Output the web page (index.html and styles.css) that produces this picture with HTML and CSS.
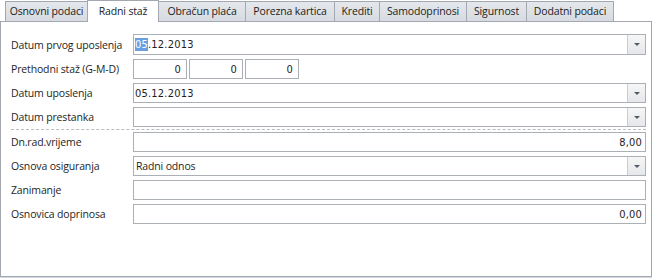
FILE: index.html
```html
<!DOCTYPE html>
<html>
<head>
<meta charset="utf-8">
<link rel="stylesheet" href="styles.css">
</head>
<body>
<div class="frame">
  <div class="tabs">
    <div class="tab t1">Osnovni podaci</div>
    <div class="tab t2 active">Radni staž</div>
    <div class="tab t3">Obračun plaća</div>
    <div class="tab t4">Porezna kartica</div>
    <div class="tab t5">Krediti</div>
    <div class="tab t6">Samodoprinosi</div>
    <div class="tab t7">Sigurnost</div>
    <div class="tab t8">Dodatni podaci</div>
  </div>
  <div class="panel">
    <div class="row first">
      <div class="label">Datum prvog uposlenja</div>
      <div class="field combo"><span class="val"><span class="sel">05</span>.12.2013</span><span class="btn"><i class="tri"></i></span></div>
    </div>
    <div class="row">
      <div class="label">Prethodni staž (G-M-D)</div>
      <div class="triple">
        <div class="field small num"><span class="val">0</span></div>
        <div class="field small num"><span class="val">0</span></div>
        <div class="field small num"><span class="val">0</span></div>
      </div>
    </div>
    <div class="row">
      <div class="label">Datum uposlenja</div>
      <div class="field combo"><span class="val">05.12.2013</span><span class="btn"><i class="tri"></i></span></div>
    </div>
    <div class="row">
      <div class="label">Datum prestanka</div>
      <div class="field combo"><span class="val"></span><span class="btn"><i class="tri"></i></span></div>
    </div>
    <div class="sep"></div>
    <div class="row">
      <div class="label">Dn.rad.vrijeme</div>
      <div class="field num"><span class="val">8,00</span></div>
    </div>
    <div class="row">
      <div class="label">Osnova osiguranja</div>
      <div class="field combo"><span class="val sans">Radni odnos</span><span class="btn"><i class="tri"></i></span></div>
    </div>
    <div class="row">
      <div class="label">Zanimanje</div>
      <div class="field"><span class="val"></span></div>
    </div>
    <div class="row">
      <div class="label">Osnovica doprinosa</div>
      <div class="field num"><span class="val">0,00</span></div>
    </div>
  </div>
</div>
</body>
</html>
```

FILE: styles.css
```css
html, body {
  margin: 0;
  padding: 0;
  background: #ffffff;
}
body {
  font-family: "Open Sans", "Noto Sans", sans-serif;
  font-size: 10.5px;
  letter-spacing: -0.15px;
  color: #1e1e1e;
  width: 653px;
  height: 278px;
  overflow: hidden;
}
.frame {
  display: flex;
  flex-direction: column;
  width: 653px;
  height: 278px;
}
.tabs {
  display: flex;
  align-items: flex-end;
  height: 21px;
  padding-left: 5px;
  background: #ffffff;
  position: relative;
  z-index: 2;
}
.tab {
  height: 20px;
  box-sizing: border-box;
  border: 1px solid #a3a8b0;
  border-bottom: none;
  margin-right: -1px;
  background: linear-gradient(#e4e7eb, #d7dbe1);
  display: flex;
  align-items: center;
  justify-content: center;
  white-space: nowrap;
  color: #222;
  padding-bottom: 1px;
}
.t1 { width: 83px; }
.t2 { width: 72px; }
.t3 { width: 88px; }
.t4 { width: 90px; }
.t5 { width: 46px; }
.t6 { width: 88px; }
.t7 { width: 61px; }
.t8 { width: 88px; }
.tab.active {
  height: 22px;
  margin-bottom: -1px;
  background: #ffffff;
  padding-bottom: 2px;
  position: relative;
  z-index: 3;
}
.panel {
  flex: 1;
  border: 1px solid #a3a8b0;
  margin-right: 1px;
  padding: 12px 5px 0 10px;
  box-shadow: 0 1px 0 #d3d8e0;
  margin-bottom: 1px;
  display: flex;
  flex-direction: column;
  gap: 4px;
}
.row {
  display: flex;
  align-items: center;
  height: 20px;
}
.row.first {
  height: 21px;
}
.label {
  width: 122px;
  flex: none;
}
.field {
  flex: 1;
  height: 100%;
  box-sizing: border-box;
  border: 1px solid #abafb6;
  background: #fff;
  display: flex;
  align-items: center;
  font-family: "DejaVu Sans Condensed", "DejaVu Sans", sans-serif;
  font-size: 11px;
  letter-spacing: 0.2px;
}
.field .val {
  flex: 1;
  padding: 0 3px 0 1px;
  white-space: nowrap;
}
.field .val.sans {
  font-family: "Open Sans", "Noto Sans", sans-serif;
  font-size: 10.5px;
  letter-spacing: -0.15px;
  padding-left: 2px;
}
.field.num .val {
  text-align: right;
}
.sel {
  background: #6a9fe0;
  color: #ffffff;
}
.combo .btn {
  width: 17px;
  height: 100%;
  border-left: 1px solid #c9ccd1;
  background: linear-gradient(#f5f6f7, #e5e7ea);
  display: flex;
  align-items: center;
  justify-content: center;
}
.tri {
  display: block;
  width: 0;
  height: 0;
  border-left: 3px solid transparent;
  border-right: 3px solid transparent;
  border-top: 3px solid #555a66;
}
.triple {
  display: flex;
  gap: 2px;
  height: 100%;
}
.field.small {
  flex: none;
  width: 54px;
}
.field.small .val {
  padding-right: 5px;
}
.sep {
  height: 0;
  border-top: 1px dashed #b8bcc2;
  margin: -2px 0 -2px 0;
}
```
